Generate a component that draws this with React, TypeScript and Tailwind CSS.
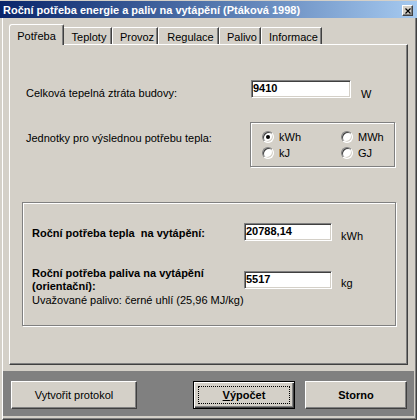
import React from "react";

const raised =
  "border border-white border-r-[#404040] border-b-[#404040] shadow-[inset_-1px_-1px_0_#808080]";
const sunken =
  "bg-white border border-[#808080] border-r-white border-b-white shadow-[inset_1px_1px_0_#404040,inset_-1px_-1px_0_#d4d0c8]";
const etched = "border border-[#808080] shadow-[inset_1px_1px_0_#ffffff,1px_1px_0_#ffffff]";

function Radio({ checked, label }: { checked?: boolean; label: string }) {
  return (
    <div className="flex items-center gap-[5px] h-[12px]">
      <div className="w-[12px] h-[12px] rounded-full bg-white border border-[#808080] border-r-white border-b-white shadow-[inset_1px_1px_0_#404040,inset_-1px_-1px_0_#d4d0c8] flex items-center justify-center">
        {checked && <div className="w-[4px] h-[4px] rounded-full bg-black" />}
      </div>
      <span>{label}</span>
    </div>
  );
}

function Tab({ label, w }: { label: string; w: string }) {
  return (
    <div
      className={`${w} h-[17px] border-l border-t border-white border-r border-r-[#404040] shadow-[inset_-1px_0_0_#808080] rounded-tl-[2px] pt-[3px] pl-[4px] text-center`}
    >
      {label}
    </div>
  );
}

export default function App() {
  return (
    <div className="w-[417px] h-[420px] bg-[#d4d0c8] flex flex-col overflow-hidden text-black text-[11px] leading-[13px] font-['Liberation_Sans',Arial,sans-serif]">
      {/* Title bar */}
      <div className="h-[18px] shrink-0 border-t border-[#d4d0c8] bg-linear-to-r from-[#0a246a] to-[#a6caf0] flex justify-between">
        <div className="pl-[3px] pt-[3px] font-bold text-white">
          Roční potřeba energie a paliv na vytápění (Ptáková 1998)
        </div>
        <div
          className={`w-[11px] h-[11px] mt-[4px] mr-[4px] bg-[#d4d0c8] ${raised} flex items-center justify-center`}
        >
          <svg width="6" height="6" viewBox="0 0 6 6">
            <path d="M0.5 0.5 L5.5 5.5 M5.5 0.5 L0.5 5.5" stroke="#000" strokeWidth="1.2" />
          </svg>
        </div>
      </div>

      {/* Body */}
      <div className="flex-1 ml-[2px] border-l border-white border-r border-r-[#404040] border-b border-b-[#404040] shadow-[inset_-1px_-1px_0_#808080] flex flex-col">
        {/* Tabs */}
        <div className="mt-[6px] ml-[6px] h-[20px] flex items-end relative z-10">
          <div className="w-[55px] h-[21px] -mb-px -mr-[2px] relative z-10 bg-[#d4d0c8] border-l border-t border-white border-r border-r-[#404040] shadow-[inset_-1px_0_0_#808080] rounded-tl-[3px] rounded-tr-[2px] pt-[5px] text-center">
            Potřeba
          </div>
          <Tab label="Teploty" w="w-[50px]" />
          <Tab label="Provoz" w="w-[46px]" />
          <Tab label="Regulace" w="w-[61px]" />
          <Tab label="Palivo" w="w-[42px]" />
          <Tab label="Informace" w="w-[61px]" />
        </div>

        {/* Panel */}
        <div className={`ml-[6px] w-[399px] h-[321px] shrink-0 ${raised} flex flex-col`}>
          {/* Row 1 */}
          <div className="mt-[35px] ml-[16px] flex h-[18px]">
            <div className="w-[225px] pt-[7px]">Celková tepelná ztráta budovy:</div>
            <div className={`w-[100px] h-[18px] ${sunken} pl-[1px] pt-[1px] font-bold`}>9410</div>
            <div className="ml-[10px] pt-[8px]">W</div>
          </div>

          {/* Row 2 */}
          <div className="mt-[24px] ml-[16px] flex h-[45px]">
            <div className="w-[224px] pt-[10px]">Jednotky pro výslednou potřebu tepla:</div>
            <div className={`w-[145px] h-[45px] ${etched} pl-[11px] pt-[8px]`}>
              <div className="grid grid-cols-[79px_auto] gap-y-[4px]">
                <Radio checked label="kWh" />
                <Radio label="MWh" />
                <Radio label="kJ" />
                <Radio label="GJ" />
              </div>
            </div>
          </div>

          {/* Results frame */}
          <div className={`mt-[35px] ml-[12px] w-[374px] h-[124px] ${etched} pl-[9px] pt-[20px] flex flex-col`}>
            <div className="flex h-[18px]">
              <div className="w-[212px] pt-[4px] font-bold">{"Roční potřeba tepla\u00a0 na vytápění:"}</div>
              <div className={`w-[88px] h-[18px] ${sunken} pl-[1px] pt-[1px] font-bold`}>20788,14</div>
              <div className="ml-[9px] pt-[7px]">kWh</div>
            </div>
            <div className="mt-[26px] flex h-[26px]">
              <div className="w-[212px] font-bold">
                Roční potřeba paliva na vytápění
                <br />
                (orientační):
              </div>
              <div className={`mt-[4px] w-[88px] h-[18px] ${sunken} pl-[1px] pt-[1px] font-bold`}>5517</div>
              <div className="ml-[9px] pt-[10px]">kg</div>
            </div>
            <div className="mt-[1px]">Uvažované palivo: černé uhlí (25,96 MJ/kg)</div>
          </div>
        </div>

        {/* Button bar */}
        <div className="mt-[6px] mr-[2px] h-[45px] bg-[#808080] pt-[10px] pl-[8px] flex items-start">
          <div className={`w-[126px] h-[28px] bg-[#d4d0c8] ${raised} flex items-center justify-center`}>
            Vytvořit protokol
          </div>
          <div className="ml-[56px] w-[102px] h-[28px] relative bg-[#d4d0c8] border border-black shadow-[inset_1px_1px_0_#ffffff,inset_-1px_-1px_0_#404040,inset_-2px_-2px_0_#808080] flex items-center justify-center font-bold">
            <span>
              <span className="underline">V</span>ýpočet
            </span>
            <div className="absolute inset-[4px] border border-dotted border-black" />
          </div>
          <div className={`ml-[10px] w-[102px] h-[28px] bg-[#d4d0c8] ${raised} flex items-center justify-center font-bold`}>
            Storno
          </div>
        </div>
      </div>
    </div>
  );
}
